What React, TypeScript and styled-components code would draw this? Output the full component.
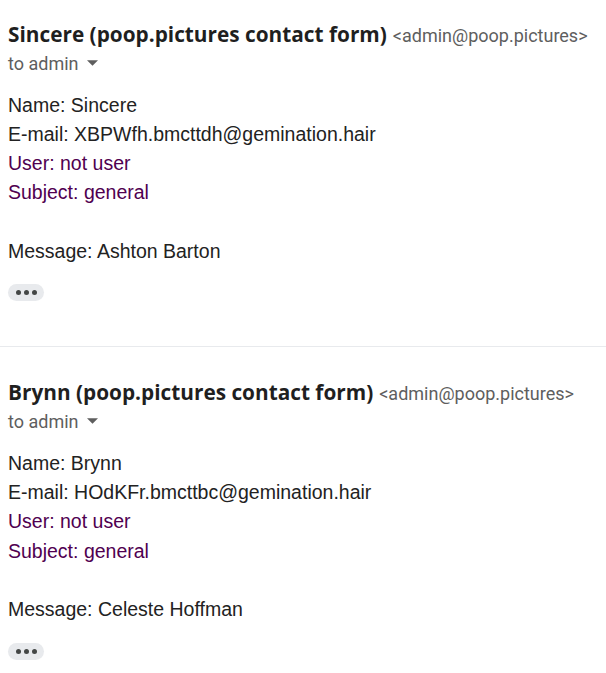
import styled, { createGlobalStyle } from "styled-components";

type TMail = {
  name: string;
  email: string;
  message: string;
};

const MAILS: TMail[] = [
  {
    name: "Sincere",
    email: "XBPWfh.bmcttdh@gemination.hair",
    message: "Ashton Barton",
  },
  {
    name: "Brynn",
    email: "HOdKFr.bmcttbc@gemination.hair",
    message: "Celeste Hoffman",
  },
];

const GlobalStyle = createGlobalStyle`
  html, body {
    margin: 0;
    padding: 0;
    background: #ffffff;
  }
`;

const MailItem: React.FC<{ mail: TMail; first?: boolean }> = ({
  mail,
  first,
}) => {
  return (
    <Message $first={first}>
      <SenderRow>
        <SenderName>{mail.name} (poop.pictures contact form)</SenderName>
        <SenderAddress>&lt;admin@poop.pictures&gt;</SenderAddress>
      </SenderRow>
      <Recipient>
        to admin
        <svg width="11" height="6" viewBox="0 0 10 5">
          <path d="M0 0 L5 5 L10 0 Z" fill="#5e5e5e" />
        </svg>
      </Recipient>
      <Body>
        <Line>Name: {mail.name}</Line>
        <Line>E-mail: {mail.email}</Line>
        <Line $quoted>User: not user</Line>
        <Line $quoted>Subject: general</Line>
        <Line>&nbsp;</Line>
        <Line>Message: {mail.message}</Line>
      </Body>
      <MoreButton aria-label="Show trimmed content">
        <Dot />
        <Dot />
        <Dot />
      </MoreButton>
    </Message>
  );
};

const App = () => {
  return (
    <>
      <GlobalStyle />
      <Thread>
        {MAILS.map((mail, i) => (
          <div key={mail.name}>
            {i > 0 && <Divider />}
            <MailItem mail={mail} first={i === 0} />
          </div>
        ))}
      </Thread>
    </>
  );
};

export default App;

const Thread = styled.div`
  width: 606px;
`;

const Message = styled.section<{ $first?: boolean }>`
  padding: ${({ $first }) => ($first ? "19px" : "30px")} 8px 0;
`;

const SenderRow = styled.div`
  display: flex;
  align-items: baseline;
  gap: 6px;
  height: 30px;
  line-height: 30px;
  white-space: nowrap;
`;

const SenderName = styled.span`
  font-family: "Open Sans", Roboto, sans-serif;
  font-weight: 700;
  font-size: 20.8px;
  color: #1f1f1f;
`;

const SenderAddress = styled.span`
  font-family: Roboto, "Noto Sans", sans-serif;
  font-size: 18px;
  color: #5e5e5e;
`;

const Recipient = styled.div`
  display: flex;
  align-items: center;
  gap: 8px;
  height: 28px;
  font-family: Roboto, "Noto Sans", sans-serif;
  font-size: 18px;
  color: #5e5e5e;
`;

const Body = styled.div`
  margin-top: 13.5px;
  font-family: "Liberation Sans", Arial, sans-serif;
  font-size: 19.5px;
  line-height: 29.3px;
  color: #222222;
`;

const Line = styled.div<{ $quoted?: boolean }>`
  color: ${({ $quoted }) => ($quoted ? "#500050" : "#222222")};
`;

const MoreButton = styled.button`
  display: flex;
  align-items: center;
  justify-content: center;
  gap: 3px;
  margin-top: 18px;
  width: 36px;
  height: 17px;
  padding: 0;
  border: none;
  border-radius: 9px;
  background: #e8eaed;
`;

const Dot = styled.span`
  width: 5px;
  height: 5px;
  border-radius: 50%;
  background: #444746;
`;

const Divider = styled.hr`
  margin: 45px 0 0;
  border: none;
  border-top: 1px solid #e8eaed;
`;
